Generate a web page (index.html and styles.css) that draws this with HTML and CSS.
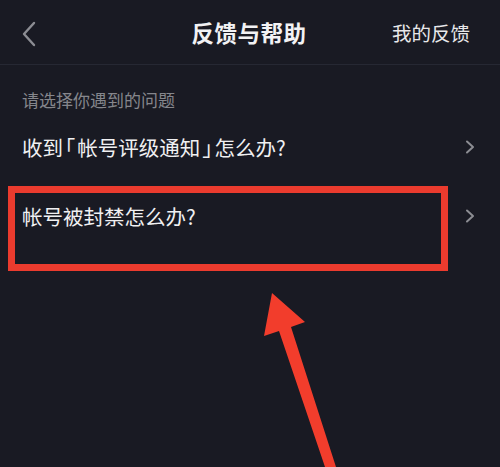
FILE: index.html
```html
<!DOCTYPE html>
<html lang="zh-CN">
<head>
<meta charset="utf-8" />
<title>反馈与帮助</title>
<link rel="stylesheet" href="styles.css">
</head>
<body>
<div class="page">
	<div class="topbar">
		<div class="back">
			<svg width="16" height="26" viewBox="0 0 16 26"><path d="M13 2 L3 13 L13 24" fill="none" stroke="#8c8d93" stroke-width="2.4" stroke-linecap="round" stroke-linejoin="round"/></svg>
		</div>
		<div class="title">反馈与帮助</div>
		<div class="mine">我的反馈</div>
	</div>

	<div class="hint">请选择你遇到的问题</div>

	<div class="row">
		<span class="q">收到<span class="br">｢</span>帐号评级通知<span class="br">｣</span>怎么办?</span>
		<svg class="go" width="10" height="14" viewBox="0 0 10 14"><path d="M2 1.5 L8 7 L2 12.5" fill="none" stroke="#8c8d93" stroke-width="2" stroke-linecap="round" stroke-linejoin="round"/></svg>
	</div>
	<div class="row">
		<span class="q">帐号被封禁怎么办?</span>
		<svg class="go" width="10" height="14" viewBox="0 0 10 14"><path d="M2 1.5 L8 7 L2 12.5" fill="none" stroke="#8c8d93" stroke-width="2" stroke-linecap="round" stroke-linejoin="round"/></svg>
	</div>

	<!-- annotation drawn over the screen -->
	<svg class="mark" width="500" height="467" viewBox="0 0 500 467">
		<rect x="11.5" y="189.5" width="433" height="78" fill="none" stroke="#eb3b2e" stroke-width="7"/>
		<polygon points="272,293 305,322 291,327 336,467 325,467 279,331 264,336" fill="#f23d2c"/>
	</svg>
</div>
</body>
</html>
```

FILE: styles.css
```css
html, body {
	margin: 0;
	padding: 0;
	background-color: #191a23;
}

.page {
	position: relative;
	width: 500px;
	height: 467px;
	overflow: hidden;
	font-family: "Noto Sans CJK SC", "Noto Sans", sans-serif;
	color: #f2f2f4;
}

.topbar {
	height: 64px;
	border-bottom: 1px solid #262833;
	display: flex;
	align-items: center;
	padding: 0 30px 0 21px;
}

.back {
	width: 60px;
	display: flex;
	align-items: center;
	padding-top: 3px;
}

.title {
	flex: 1;
	text-align: center;
	font-size: 22.5px;
	font-weight: bold;
	letter-spacing: 0.5px;
	padding-left: 47px;
}

.mine {
	width: 100px;
	text-align: right;
	font-size: 19.5px;
	color: #e8e8ea;
}

.hint {
	margin-top: 23px;
	padding-left: 22px;
	font-size: 17px;
	line-height: 24px;
	color: #85868c;
}

.row {
	height: 69px;
	display: flex;
	align-items: center;
	justify-content: space-between;
	padding: 0 25px 0 22px;
}

.row:first-of-type {
	margin-top: 6px;
}

.q {
	font-size: 20.5px;
	color: #f0f0f2;
}

.q .br {
	margin: 0 2px;
}

.go {
	margin-top: 1px;
}

.mark {
	position: absolute;
	left: 0;
	top: 0;
}
```
